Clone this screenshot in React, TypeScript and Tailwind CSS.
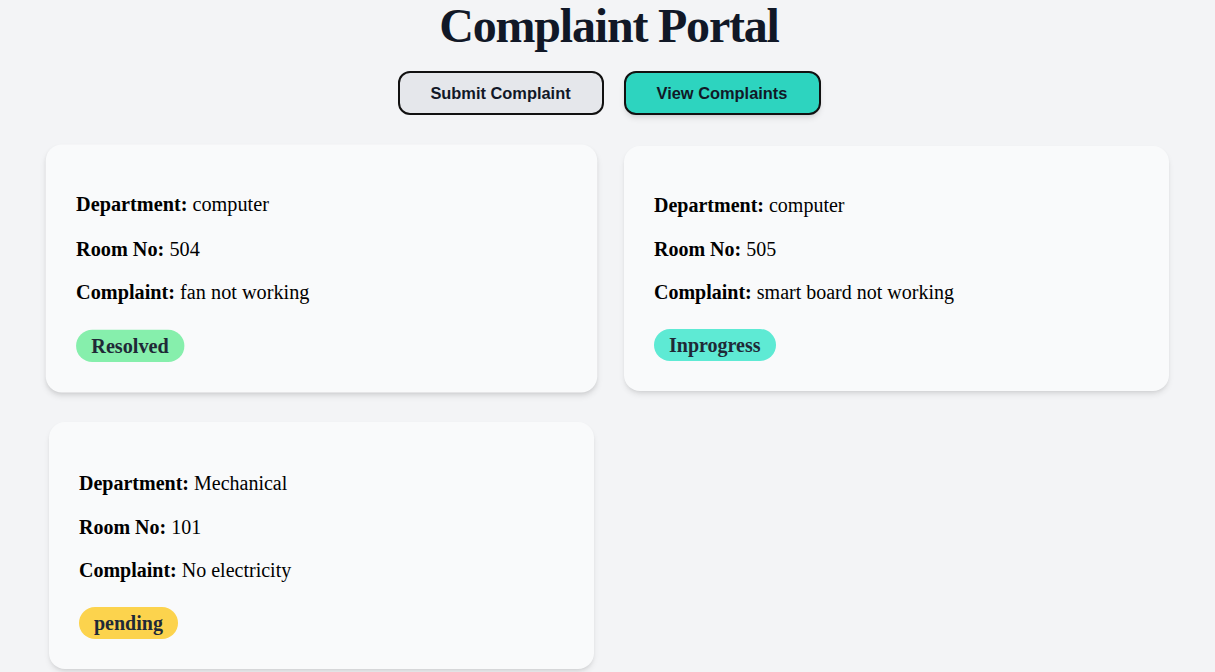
import React from 'react';

interface Complaint {
  id: number;
  department: string;
  room: string;
  text: string;
  status: 'Resolved' | 'Inprogress' | 'pending';
}

const complaints: Complaint[] = [
  { id: 1, department: 'computer', room: '504', text: 'fan not working', status: 'Resolved' },
  { id: 2, department: 'computer', room: '505', text: 'smart board not working', status: 'Inprogress' },
  { id: 3, department: 'Mechanical', room: '101', text: 'No electricity', status: 'pending' },
];

const statusColor: Record<Complaint['status'], string> = {
  Resolved: 'bg-[#86efac]',
  Inprogress: 'bg-[#5eead4]',
  pending: 'bg-[#fcd34d]',
};

const App: React.FC = () => {
  return (
    <div className="min-h-screen bg-[#f3f4f6] font-['Liberation_Serif',serif]">
      <h1 className="pt-[2px] pl-[3px] text-center text-5xl leading-[48px] font-bold tracking-tight text-[#111827]">
        Complaint Portal
      </h1>

      <div className="mt-[21px] flex justify-center gap-5 pl-[3px] font-['Liberation_Sans',Arial,sans-serif]">
        <button className="h-[44px] w-[206px] rounded-xl border-2 border-[#111] bg-[#e5e7eb] text-[16.4px] font-bold text-[#111827]">
          Submit Complaint
        </button>
        <button className="h-[44px] w-[197px] rounded-xl border-2 border-[#111] bg-[#2dd4bf] text-[16.4px] font-bold text-[#111827] shadow-md">
          View Complaints
        </button>
      </div>

      <div className="mt-[31px] ml-[49px] grid w-[1120px] grid-cols-2 gap-x-[30px] gap-y-[31px] pb-6">
        {complaints.map((c, i) => (
          <div
            key={c.id}
            className={`rounded-2xl bg-[#f9fafb] px-[30px] pt-[45px] pb-[30px] text-xl leading-7 text-black shadow-md ${
              i === 0 ? 'scale-[1.012] shadow-lg' : ''
            } ${i === 2 ? 'pt-[47px]' : ''}`}
          >
            <p className="mb-[15.5px]">
              <span className="font-bold">Department:</span> {c.department}
            </p>
            <p className="mb-[15.5px]">
              <span className="font-bold">Room No:</span> {c.room}
            </p>
            <p>
              <span className="font-bold">Complaint:</span> {c.text}
            </p>
            <span
              className={`mt-[23px] inline-block rounded-full px-[15px] py-0.5 text-xl leading-7 font-bold text-[#1f2937] ${statusColor[c.status]}`}
            >
              {c.status}
            </span>
          </div>
        ))}
      </div>
    </div>
  );
};

export default App;
